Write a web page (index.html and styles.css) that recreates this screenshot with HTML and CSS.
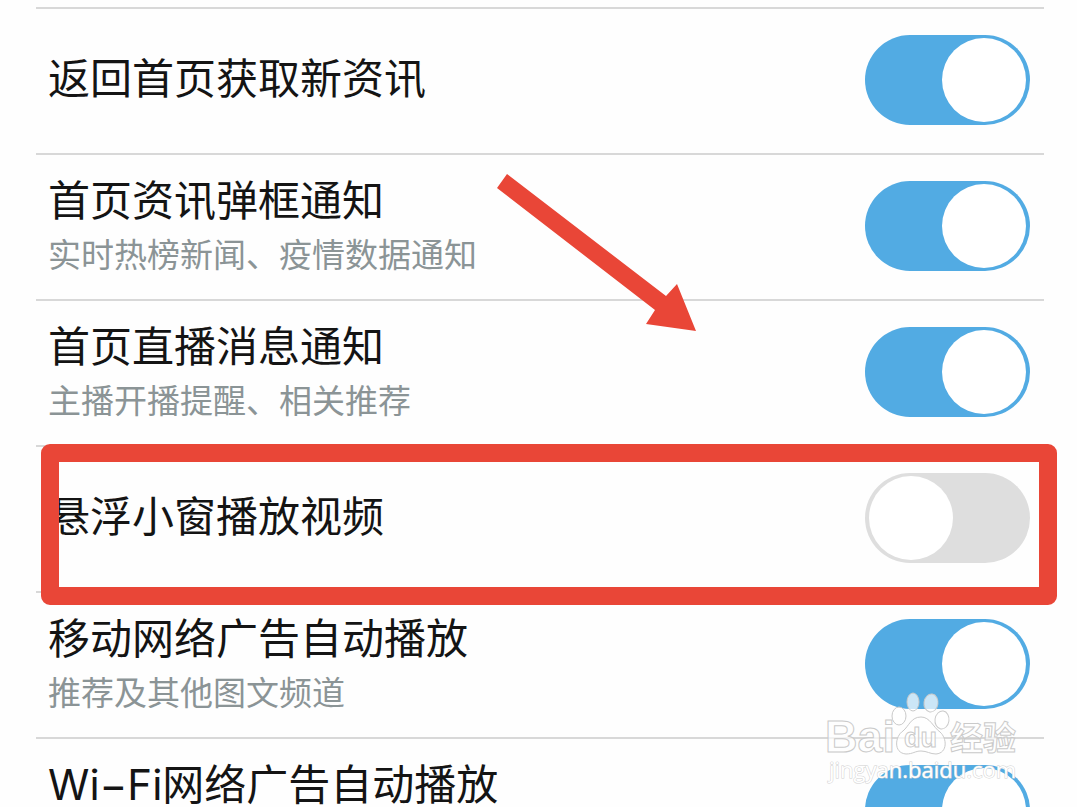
FILE: index.html
```
<!DOCTYPE html>
<html lang="zh-CN">
  <head>
    <meta charset="utf-8">
    <title>设置</title>
    <link rel="stylesheet" href="styles.css">
  </head>
  <body>
    <main class="screen">
      <div class="settings">
        <div class="row">
          <label class="text" for="refresh">
            <span class="title">返回首页获取新资讯</span>
          </label>
          <input class="switch" type="checkbox" id="refresh" checked>
        </div>
        <div class="row">
          <label class="text" for="news">
            <span class="title">首页资讯弹框通知</span>
            <span class="desc">实时热榜新闻、疫情数据通知</span>
          </label>
          <input class="switch" type="checkbox" id="news" checked>
        </div>
        <div class="row">
          <label class="text" for="live">
            <span class="title">首页直播消息通知</span>
            <span class="desc">主播开播提醒、相关推荐</span>
          </label>
          <input class="switch" type="checkbox" id="live" checked>
        </div>
        <div class="row marked">
          <label class="text" for="float">
            <span class="title">悬浮小窗播放视频</span>
          </label>
          <input class="switch" type="checkbox" id="float">
        </div>
        <div class="row">
          <label class="text" for="mobile">
            <span class="title">移动网络广告自动播放</span>
            <span class="desc">推荐及其他图文频道</span>
          </label>
          <input class="switch" type="checkbox" id="mobile" checked>
        </div>
        <div class="row">
          <label class="text" for="wifi">
            <span class="title">Wi−Fi网络广告自动播放</span>
            <span class="desc">推荐及其他图文频道</span>
          </label>
          <input class="switch" type="checkbox" id="wifi" checked>
        </div>
      </div>

      <!-- arrow pointing at the floating window switch -->
      <svg class="arrow" viewBox="0 0 200 158" width="200" height="158">
        <path d="M11 1 L170 123 L181 111 L200 158 L150 151 L159 137 L1 15 Z"/>
      </svg>

      <svg class="watermark" viewBox="0 0 200 100" width="200" height="100">
        <g class="mark">
          <text class="bai" x="1" y="59">Bai</text>
          <ellipse cx="75" cy="23" rx="7" ry="9"/>
          <ellipse cx="89" cy="9" rx="6" ry="9"/>
          <ellipse cx="107" cy="10" rx="7" ry="9" transform="rotate(8 107 10)"/>
          <ellipse cx="118" cy="27" rx="7" ry="9" transform="rotate(8 118 27)"/>
          <path d="M97 24 C87 24 85 33 79 38 C71 43 69 60 82 61 C89 61 91 58 97 58 C103 58 106 61 112 61 C124 60 123 45 116 39 C109 34 106 24 97 24 Z"/>
          <text class="du" x="80" y="54">du</text>
          <text class="jingyan" x="126" y="57">经验</text>
        </g>
        <text class="site" x="5" y="85">jingyan.baidu.com</text>
      </svg>
    </main>
  </body>
</html>
```
FILE: styles.css
```
* {
  box-sizing: border-box;
}
body {
  margin: 0;
  background: #fefefe;
  color: #141414;
  font-family: Inter, "Noto Sans CJK SC", sans-serif;
}
.screen {
  position: relative;
  height: 100vh;
  padding: 7px 33px 0 36px;
  overflow: hidden;
}
.row {
  position: relative;
  display: flex;
  align-items: center;
  justify-content: space-between;
  height: 146px;
  padding: 0 14px 2px 12px;
  border-top: 2px solid #d8d8d8;
}
.text {
  display: flex;
  flex-direction: column;
  margin-bottom: 2px;
}
.title {
  font-size: 42px;
  line-height: 60px;
}
.desc {
  color: #8b9496;
  font-size: 33px;
  line-height: 48px;
}
.switch {
  appearance: none;
  display: flex;
  width: 165px;
  height: 90px;
  margin: 0;
  padding: 3px 4px;
  border-radius: 45px;
  background: #dedede;
}
.switch::before {
  content: "";
  width: 84px;
  height: 84px;
  border-radius: 50%;
  background: #fff;
}
.switch:checked {
  justify-content: flex-end;
  background: #52abe3;
}
/* red frame round the highlighted row */
.marked::after {
  content: "";
  position: absolute;
  z-index: 1;
  top: -3px;
  right: -13px;
  bottom: -14px;
  left: 5px;
  border: 18px solid #e94637;
  border-radius: 9px;
  pointer-events: none;
}
.arrow {
  position: absolute;
  top: 173px;
  left: 496px;
  fill: #e94637;
  pointer-events: none;
}
.watermark {
  position: absolute;
  right: 53px;
  bottom: 14px;
  overflow: visible;
  pointer-events: none;
}
.mark {
  fill: #fff;
  fill-opacity: 0.7;
  stroke: #cacaca;
  stroke-width: 1px;
}
.bai {
  font: bold 45px "Liberation Sans", sans-serif;
}
.du {
  font: bold 27px "Liberation Sans", sans-serif;
}
.jingyan {
  font: bold 33px "Noto Sans CJK SC", sans-serif;
}
.site {
  font: 22px "Open Sans", sans-serif;
  fill: #fff;
  stroke: #d0d0d0;
  stroke-width: 1px;
  paint-order: stroke;
}
```
